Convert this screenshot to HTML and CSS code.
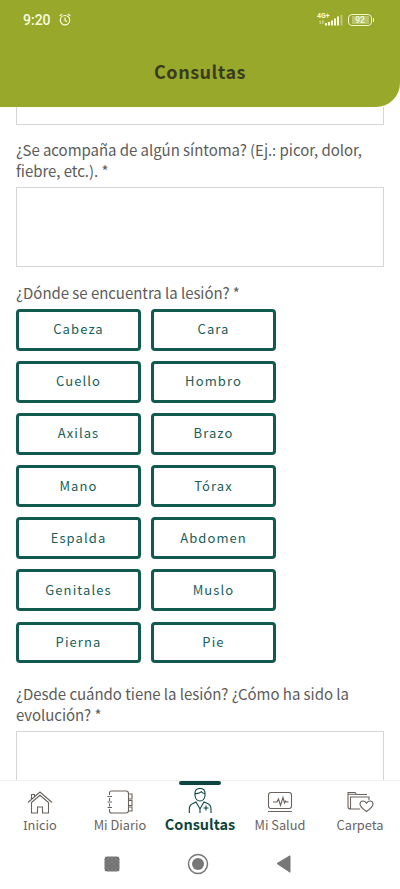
FILE: index.html
```html
<!DOCTYPE html>
<html lang="es">
<head>
<meta charset="utf-8">
<meta name="viewport" content="width=device-width, initial-scale=1">
<title>Consultas</title>
<link rel="stylesheet" href="styles.css">
</head>
<body>
<div class="app">
  <header class="header">
    <div class="status">
      <div class="status-left">
        <span class="clock">9:20</span>
        <svg class="alarm" viewBox="0 0 12 13" width="12" height="13" fill="none" stroke="currentColor" stroke-width="1.2"><circle cx="6" cy="7.2" r="4.7"/><path d="M.7 3 3.2.9M11.300 3 8.800.9M6 4.500V7.500L8 8.700"/></svg>
      </div>
      <div class="status-right">
        <div class="signal">
          <span class="network">4G+</span>
          <svg viewBox="0 0 25 11" width="25" height="11" fill="currentColor"><path d="M1 7 2.500 5.500V9H1.800V7zM4.500 9V5l1.500 1.700H5.200V9zM7 8h2v2.500H7zM10 7h2v3.500h-2zM13 5.500h2v5h-2zM16 3.500h2v7h-2zM19 1.500h2v9h-2z"/><path opacity=".4" d="M22.500 0h2v10.500h-2z"/></svg>
        </div>
        <div class="battery"><span class="level">92</span></div>
        <span class="battery-tip"></span>
      </div>
    </div>
    <h1 class="title">Consultas</h1>
  </header>

  <main class="form">
    <div class="box box-first"></div>
    <p class="label label-symptom">¿Se acompaña de algún síntoma? (Ej.: picor, dolor,<br>fiebre, etc.). *</p>
    <div class="box box-symptom"></div>
    <p class="label label-where">¿Dónde se encuentra la lesión? *</p>
    <div class="options">
      <button class="option">Cabeza</button><button class="option">Cara</button>
      <button class="option">Cuello</button><button class="option">Hombro</button>
      <button class="option">Axilas</button><button class="option">Brazo</button>
      <button class="option">Mano</button><button class="option">Tórax</button>
      <button class="option">Espalda</button><button class="option">Abdomen</button>
      <button class="option">Genitales</button><button class="option">Muslo</button>
      <button class="option">Pierna</button><button class="option">Pie</button>
    </div>
    <p class="label label-since">¿Desde cuándo tiene la lesión? ¿Cómo ha sido la<br>evolución? *</p>
    <div class="box box-since"></div>
  </main>

  <nav class="tabs">
    <a class="tab">
      <svg class="icon" viewBox="0 0 28 28" width="28" height="28"><path d="M2 15.500 14 5l12 10.500M5.500 15.500 14 8.300l8.500 7.200V26h-6v-6h-5v6h-6zM5.500 12V7.500h3v2"/></svg>
      <span class="tab-text"><span class="serif-i">I</span>nicio</span>
    </a>
    <a class="tab">
      <svg class="icon" viewBox="0 0 28 28" width="28" height="28"><path d="M3.500 8V6q0-2 2-2H20q2.500 0 2.500 2.500v17Q22.500 26 20 26H5.500q-2 0-2-2v-2M3.500 11v3M3.500 16.500v3M1.500 9.500h4.500M1.500 15h4.500M1.500 20.500h4.500M22.500 7H26v5h-3.500M22.500 13.500H26v5h-3.500M22.500 20H26v4h-3.500"/></svg>
      <span class="tab-text">Mi Diario</span>
    </a>
    <a class="tab tab-active">
      <svg class="icon" viewBox="0 0 28 28" width="28" height="28"><path d="M9 6q0-4.500 5-4.500T19 6v3q-1 5-5 5T9 9zM9.200 6.500q3.800.500 6.300-1.800 1 1.800 3.300 1.800M3.300 26v-4q0-4 3.700-5.500l3-1.500 4 7 4-7 3.500 1.500Q25 18 25 22v4M14 22v4M17.500 21h5M20 18.500v5"/></svg>
      <span class="tab-text">Consultas</span>
    </a>
    <a class="tab">
      <svg class="icon" viewBox="0 0 28 28" width="28" height="28"><rect x="2.500" y="5.500" width="23" height="16" rx="2.500"/><path d="M2 24.500h24M7 15h4l1.500-3 2 6.500 2.500-8 1.500 5.500 1.200-2 .8 1h2"/></svg>
      <span class="tab-text">Mi Salud</span>
    </a>
    <a class="tab">
      <svg class="icon" viewBox="0 0 28 28" width="28" height="28"><path d="M14 22H4.500q-2.500 0-2.500-2V5.500h7l1.500 2H21M4.500 21.500V10H23v3M2 7.300h8.500M20.500 24.500q-6.500-4.500-6.500-7.500 0-2.500 2.500-3 2.500-.2 4 2.200 1.500-2.400 4-2.200 2.500.5 2.500 3 0 3-6.500 7.500z"/></svg>
      <span class="tab-text">Carpeta</span>
    </a>
  </nav>

  <div class="system">
    <svg viewBox="0 0 16 16" width="16" height="16"><rect x=".5" y=".5" width="15" height="15" rx="2.500"/></svg>
    <svg class="home" viewBox="0 0 22 22" width="22" height="22"><circle class="ring" cx="11" cy="11" r="9.500"/><circle cx="11" cy="11" r="6"/></svg>
    <svg viewBox="0 0 16 18" width="16" height="18"><path d="M1 8.500 14 .8v16.400z" stroke="#777" stroke-width="1" stroke-linejoin="round"/></svg>
  </div>
</div>
</body>
</html>
```

FILE: styles.css
```css
* { box-sizing: border-box; }

body {
  margin: 0;
  background: #fff;
  font-family: "Noto Sans CJK SC", "Noto Sans", sans-serif;
}

.app {
  display: flex;
  flex-direction: column;
  height: 889px;
  overflow: hidden;
}

.header {
  flex: 0 0 107px;
  background: #98a82a;
  border-bottom-right-radius: 24px;
}

.status {
  display: flex;
  justify-content: space-between;
  height: 39px;
  padding: 0 26px 0 23px;
  color: #fafcdf;
  font-family: Roboto, sans-serif;
}

.status-left, .status-right { display: flex; align-items: center; }
.status-left { gap: 8px; }
.clock { font-size: 14px; font-weight: 500; }
.signal { display: flex; flex-direction: column; width: 25px; margin-right: 6px; }
.network { height: 6px; font-size: 7px; line-height: 7px; font-weight: 700; }
.signal svg { margin-top: -4px; margin-left: 1px; }

.battery {
  display: flex;
  align-items: center;
  justify-content: center;
  width: 24px;
  height: 12px;
  border: 1px solid #f2f6c9;
  border-radius: 4px;
  padding: 1px;
}

.level {
  width: 17px;
  background: #b9c46c;
  font-size: 8.500px;
  line-height: 8px;
  font-weight: 500;
  text-align: center;
}

.battery-tip { width: 1px; height: 4px; margin-left: 1px; background: #f2f6c9; }

.title {
  margin: 20px 0 0;
  color: #383b20;
  font-size: 18px;
  line-height: 24px;
  font-weight: 700;
  letter-spacing: 0.500px;
  text-align: center;
}

.form {
  flex: 0 0 673px;
  overflow: hidden;
  padding: 0 16px;
}

.box { border: 1px solid #d6d6d6; margin-left: -0.500px; }
.box-first { height: 18px; border-top: 0; }
.box-symptom { height: 80px; }
.box-since { height: 80px; }

.label {
  margin: 0;
  color: #5c5c5c;
  font-size: 15px;
  line-height: 21px;
  letter-spacing: -0.045px;
  white-space: nowrap;
}

.label-symptom { padding: 14px 0 6px; }
.label-where { padding: 15px 0 6px; }
.label-since { padding: 20px 0 6px; }

.options {
  display: grid;
  grid-template-columns: 125px 125px;
  grid-auto-rows: 41.500px;
  gap: 10.600px 10px;
}

.option {
  padding: 0 0 1px;
  border: 3px solid #12594f;
  border-radius: 4px;
  background: #fff;
  color: #17605a;
  font: 13px/20px "Noto Sans CJK SC", sans-serif;
  letter-spacing: 1.100px;
}

.tabs {
  display: grid;
  grid-template-columns: repeat(5, 80px);
  flex: 0 0 65px;
  border-top: 1px solid #f0f0f0;
  background: #fff;
}

.tab {
  position: relative;
  display: flex;
  flex-direction: column;
  align-items: center;
  padding-top: 6px;
  color: #69635f;
}

.icon { flex: none; fill: none; stroke: currentColor; stroke-width: 1.100; }
.tab-text { font-size: 12.800px; line-height: 20px; white-space: nowrap; }
.serif-i { font-family: "Noto Sans", sans-serif; }
.tab-active { color: #0d4440; }
.tab-active .tab-text { font-size: 14.500px; line-height: 18px; font-weight: 700; }

.tab-active::before {
  content: "";
  position: absolute;
  top: 0;
  width: 42px;
  height: 4px;
  border-radius: 2px;
  background: #0d4440;
}

.system {
  display: flex;
  justify-content: space-between;
  align-items: center;
  height: 38px;
  padding: 0 108px 0 104px;
  fill: #777;
}

.ring { fill: none; stroke: #777; stroke-width: 1.500; }
```
